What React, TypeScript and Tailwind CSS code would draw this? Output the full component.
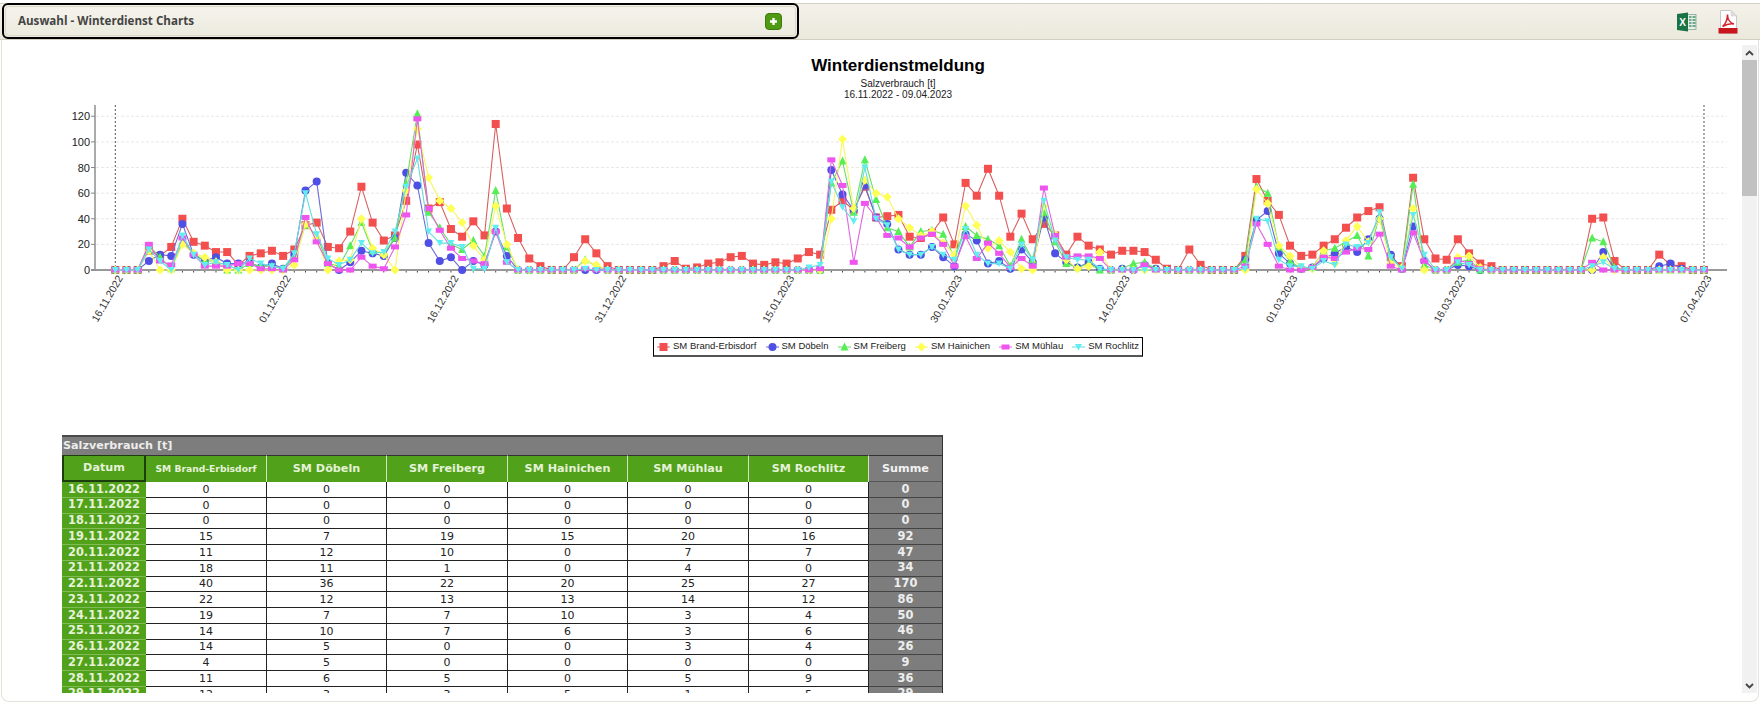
import React from "react";

const N = 143;
const X0 = 115.3;
const DX = 11.188;
const Y0 = 270;
const K = 1.281;

function fill(m: Record<number, number>): number[] {
  const a: number[] = [];
  for (let i = 0; i < N; i++) a.push(m[i] ?? 0);
  return a;
}

const series = [
  {
    name: "SM Brand-Erbisdorf", color: "#f44f4f", line: "#d86060", shape: "square",
    data: fill({3:15,4:11,5:18,6:40,7:22,8:19,9:14,10:14,11:4,12:11,13:13,14:15,15:11,16:16,17:35,18:37,19:18,20:17,21:30,22:65,23:37,24:23,25:27,26:54,27:98,28:48,29:53,30:32,31:26,32:38,33:27,34:114,35:48,36:25,37:9,38:3,41:10,42:24,43:13,44:3,49:3,50:7,51:1,52:2,53:5,54:6,55:10,56:11,57:5,58:4,59:6,60:5,61:9,62:14,63:12,64:47,65:54,66:47,67:65,68:41,69:42,70:43,71:26,72:25,73:29,74:41,75:20,76:68,77:58,78:79,79:58,80:26,81:44,82:24,83:36,84:27,85:12,86:26,87:19,88:16,89:12,90:15,91:15,92:14,93:8,94:1,96:16,97:4,101:11,102:71,103:54,104:43,105:19,106:11,107:12,108:19,109:24,110:33,111:41,112:46,113:49,114:10,115:3,116:72,117:24,118:9,119:8,120:24,121:13,122:5,123:3,132:40,133:41,134:7,138:12,139:4,140:3}),
  },
  {
    name: "SM Döbeln", color: "#4f4fe6", line: "#6a6ad8", shape: "circle",
    data: fill({3:7,4:12,5:11,6:36,7:12,8:7,9:10,10:5,11:5,12:6,13:2,14:5,15:1,16:12,17:62,18:69,19:5,21:6,22:15,23:13,24:11,25:25,26:76,27:66,28:21,29:7,30:10,32:7,33:4,34:30,35:11,64:78,65:59,66:47,67:66,68:41,69:36,70:16,71:12,72:12,73:18,74:10,75:3,76:28,77:23,78:5,79:7,80:1,81:16,82:6,83:41,84:13,85:6,86:2,87:6,88:1,90:1,92:4,93:1,101:8,102:39,103:46,104:13,105:5,106:1,107:2,108:9,109:13,110:18,111:14,112:24,113:40,114:12,115:1,116:34,117:7,120:4,121:3,133:14,134:1,138:3,139:5,140:1}),
  },
  {
    name: "SM Freiberg", color: "#55ee55", line: "#66dd66", shape: "triangle",
    data: fill({3:19,4:10,5:1,6:22,7:13,8:7,9:7,12:5,13:3,14:3,15:1,16:10,17:35,18:27,19:5,20:3,21:19,22:37,23:15,24:13,25:25,26:68,27:122,28:45,29:33,30:20,31:16,32:23,33:11,34:62,35:18,42:8,43:3,64:68,65:85,66:45,67:86,68:55,69:33,70:30,71:18,72:30,73:31,74:28,75:10,76:34,77:27,78:24,79:19,80:3,81:24,82:8,83:45,84:22,85:5,86:2,87:5,90:1,91:5,92:6,93:1,101:8,102:65,103:60,104:18,105:7,106:1,107:2,108:15,109:17,110:22,111:27,112:11,113:42,114:10,115:1,116:67,117:4,120:6,121:8,132:25,133:22,134:2}),
  },
  {
    name: "SM Hainichen", color: "#ffff55", line: "#f6f660", shape: "diamond",
    data: fill({3:15,6:20,7:13,8:10,9:6,16:4,17:36,18:25,20:7,21:8,22:40,23:17,24:12,26:62,27:110,28:72,29:54,30:48,31:37,32:19,33:8,34:50,35:20,42:7,43:4,64:40,65:102,66:48,67:70,68:60,69:57,70:40,71:33,72:27,73:30,74:21,75:12,76:50,77:35,78:17,79:23,80:14,81:1,83:50,84:28,85:8,86:1,87:3,88:14,102:63,103:52,104:19,105:11,106:2,107:1,108:15,109:5,110:23,111:34,112:22,113:40,114:5,115:2,116:48,120:10,121:11,122:2,133:10}),
  },
  {
    name: "SM Mühlau", color: "#ee55ee", line: "#e066e0", shape: "flat",
    data: fill({3:20,4:7,5:4,6:25,7:12,8:3,9:3,10:3,11:5,12:5,13:1,14:1,16:8,17:41,18:22,19:5,22:10,23:3,24:1,25:18,26:43,27:118,28:48,29:31,30:17,31:9,32:7,33:5,34:30,35:6,42:1,63:1,64:86,65:66,66:6,67:52,68:41,69:27,70:25,71:18,72:25,73:28,74:20,75:3,76:26,77:9,78:21,79:13,80:2,81:9,82:3,83:64,84:27,85:10,86:11,87:11,88:9,92:4,101:3,102:36,103:20,104:3,107:2,108:10,109:9,110:14,111:17,112:16,113:28,114:3,116:29,117:7,120:8,121:5,122:1,132:6}),
  },
  {
    name: "SM Rochlitz", color: "#60eef0", line: "#60dde0", shape: "nabla",
    data: fill({3:16,4:7,6:27,7:12,8:4,9:6,10:4,12:9,13:5,14:3,15:1,16:13,17:60,18:28,19:9,20:4,21:8,22:21,23:13,24:14,25:30,26:65,27:87,28:30,29:21,30:21,31:18,32:1,33:1,34:33,35:6,42:1,62:2,63:4,64:69,65:49,66:38,67:80,68:40,69:35,70:16,71:12,72:12,73:18,74:12,75:8,76:32,77:12,78:5,79:5,80:1,81:20,82:8,83:54,84:23,85:10,86:8,87:8,88:1,101:1,102:40,103:38,104:8,105:3,106:3,107:1,108:7,109:4,110:20,111:18,112:21,113:45,114:10,115:1,116:43,117:12,120:6,121:4,132:3,133:6,134:1}),
  },
];

function Marker({ shape, x, y, color }: { shape: string; x: number; y: number; color: string }) {
  switch (shape) {
    case "square":
      return <rect x={x - 4} y={y - 4} width={8} height={8} fill={color} />;
    case "circle":
      return <circle cx={x} cy={y} r={4} fill={color} />;
    case "triangle":
      return <polygon points={`${x},${y - 4.5} ${x + 4},${y + 3.5} ${x - 4},${y + 3.5}`} fill={color} />;
    case "diamond":
      return <polygon points={`${x},${y - 4.5} ${x + 4.5},${y} ${x},${y + 4.5} ${x - 4.5},${y}`} fill={color} />;
    case "flat":
      return <rect x={x - 4} y={y - 2.5} width={8} height={5} fill={color} />;
    default:
      return <polygon points={`${x - 3.5},${y - 3} ${x + 3.5},${y - 3} ${x},${y + 3.5}`} fill={color} />;
  }
}

const xOf = (i: number) => X0 + DX * i;
const yOf = (v: number) => Y0 - v * K;
const xLabels: [number, string][] = [
  [0, "16.11.2022"], [15, "01.12.2022"], [30, "16.12.2022"], [45, "31.12.2022"], [60, "15.01.2023"],
  [75, "30.01.2023"], [90, "14.02.2023"], [105, "01.03.2023"], [120, "16.03.2023"], [142, "07.04.2023"],
];

function Chart() {
  return (
    <svg width={1740} height={235} viewBox="2 100 1740 235" className="block">
      {[20, 40, 60, 80, 100, 120].map((v) => (
        <line key={v} x1={96} x2={1727} y1={yOf(v)} y2={yOf(v)} stroke="#e8e8e8" strokeDasharray="3 2" />
      ))}
      {[0, 142].map((i) => (
        <line key={i} x1={xOf(i)} x2={xOf(i)} y1={105} y2={Y0} stroke="#555" strokeDasharray="2 2" />
      ))}
      {Array.from({ length: N }).map((_, i) => (
        <line key={i} x1={xOf(i)} x2={xOf(i)} y1={Y0} y2={Y0 + 2.5} stroke="#444" />
      ))}
      <line x1={95} x2={95} y1={105} y2={Y0 + 1} stroke="#aaa" strokeWidth={2} />
      <line x1={91} x2={1727} y1={Y0} y2={Y0} stroke="#999" strokeWidth={2} />
      {[0, 20, 40, 60, 80, 100, 120].map((v) => (
        <g key={v}>
          <line x1={91} x2={95} y1={yOf(v)} y2={yOf(v)} stroke="#888" />
          <text x={90} y={yOf(v) + 4} textAnchor="end" fontSize={11} fill="#222" fontFamily="'Liberation Sans', Arial, sans-serif">{v}</text>
        </g>
      ))}
      {series.map((s) => (
        <g key={s.name}>
          <polyline fill="none" stroke={s.line} strokeWidth={1.1} points={s.data.map((v, i) => `${xOf(i)},${yOf(v)}`).join(" ")} />
          {s.data.map((v, i) => (
            <Marker key={i} shape={s.shape} x={xOf(i)} y={yOf(v)} color={s.color} />
          ))}
        </g>
      ))}
      {xLabels.map(([i, t]) => (
        <text key={t} x={xOf(i) + 8} y={Y0 + 8} textAnchor="end" fontSize={10.5} fill="#333" fontFamily="'Liberation Sans', Arial, sans-serif" transform={`rotate(-60 ${xOf(i) + 8} ${Y0 + 8})`}>{t}</text>
      ))}
    </svg>
  );
}

function LegendMark({ shape, color, line }: { shape: string; color: string; line: string }) {
  return (
    <svg width={13} height={10} viewBox="0 0 13 10" className="block shrink-0">
      <line x1={0} x2={13} y1={5} y2={5} stroke={line} />
      <Marker shape={shape} x={6.5} y={5} color={color} />
    </svg>
  );
}

const cols = "grid grid-cols-[84px_121px_120px_121px_120px_121px_120px_74px]";
const rows: [string, number, number, number, number, number, number, number][] = [
  ["16.11.2022", 0, 0, 0, 0, 0, 0, 0],
  ["17.11.2022", 0, 0, 0, 0, 0, 0, 0],
  ["18.11.2022", 0, 0, 0, 0, 0, 0, 0],
  ["19.11.2022", 15, 7, 19, 15, 20, 16, 92],
  ["20.11.2022", 11, 12, 10, 0, 7, 7, 47],
  ["21.11.2022", 18, 11, 1, 0, 4, 0, 34],
  ["22.11.2022", 40, 36, 22, 20, 25, 27, 170],
  ["23.11.2022", 22, 12, 13, 13, 14, 12, 86],
  ["24.11.2022", 19, 7, 7, 10, 3, 4, 50],
  ["25.11.2022", 14, 10, 7, 6, 3, 6, 46],
  ["26.11.2022", 14, 5, 0, 0, 3, 4, 26],
  ["27.11.2022", 4, 5, 0, 0, 0, 0, 9],
  ["28.11.2022", 11, 6, 5, 0, 5, 9, 36],
  ["29.11.2022", 12, 3, 3, 5, 1, 5, 29],
];

function DataTable() {
  return (
    <div className="w-[881px] ml-[60px] font-['DejaVu_Sans',sans-serif] text-[11px] leading-none">
      <div className="h-[20px] bg-[#7d7d7d] border-t-2 border-t-[#4a4a4a] border-r border-r-[#333] flex items-center pl-[1px] font-bold text-[#ececec] text-[11.2px]">Salzverbrauch [t]</div>
      <div className={`${cols} h-[27px] font-bold text-[#e4f2d8] text-[11.2px]`}>
        <div className="bg-[#52a11a] border-x-2 border-b-2 border-t border-[#1c3d0c] flex items-center justify-center">Datum</div>
        {["SM Brand-Erbisdorf", "SM Döbeln", "SM Freiberg", "SM Hainichen", "SM Mühlau", "SM Rochlitz"].map((h, i) => (
          <div key={h} className={`bg-[#52a11a] border-t border-t-[#333] border-r border-r-[#cfe4bb] flex items-center justify-center ${i === 0 ? "text-[9.2px]" : ""}`}>{h}</div>
        ))}
        <div className="bg-[#7d7d7d] border-t border-t-[#333] border-r border-r-[#333] border-b border-b-[#555] flex items-center justify-center text-[#f2f2f2]">Summe</div>
      </div>
      {rows.map((r) => (
        <div key={r[0]} className={`${cols} h-[15.75px] text-[#222]`}>
          <div className="bg-[#52a11a] border-b border-b-[#7fbc55] flex items-center justify-center font-bold text-[11.4px] text-[#e4f2d8]">{r[0]}</div>
          {r.slice(1, 7).map((v, i) => (
            <div key={i} className="bg-white border-b border-b-[#222] border-r border-r-[#222] flex items-center justify-center">{v}</div>
          ))}
          <div className="bg-[#7d7d7d] border-b border-b-[#444] border-r border-r-[#333] flex items-center justify-center font-bold text-[11.4px] text-[#eeeeee]">{r[7]}</div>
        </div>
      ))}
    </div>
  );
}

function ExcelIcon() {
  return (
    <svg width={20} height={20} viewBox="0 0 20 20" className="block">
      <rect x={7} y={2.5} width={12} height={15} fill="#e4efe8" stroke="#6f9f85" strokeWidth={0.7} />
      {[5, 8, 11, 14].map((y) => (
        <line key={y} x1={12} x2={18.5} y1={y} y2={y} stroke="#3f8a62" strokeWidth={1.4} />
      ))}
      <line x1={15} x2={15} y1={3} y2={17} stroke="#e4efe8" />
      <polygon points="0,2 11,0.5 11,19.5 0,18" fill="#1a7345" />
      <text x={5.5} y={13.5} textAnchor="middle" fontSize={10} fontWeight={700} fill="#fff" fontFamily="'Liberation Sans', sans-serif">X</text>
    </svg>
  );
}

function PdfIcon() {
  return (
    <svg width={20} height={24} viewBox="0 0 20 24" className="block">
      <path d="M2.5 0.5H13L18.5 6V23.5H2.5Z" fill="#fff" stroke="#c8c8c8" />
      <path d="M13 0.5V6H18.5Z" fill="#e0e0e0" stroke="#c8c8c8" strokeWidth={0.5} />
      <path d="M4.5 16.5C7 15 9.5 10 9.5 4.5C9.5 9 12 13 16 14C12.5 13.5 8 14.5 4.5 16.5Z" fill="none" stroke="#d8232a" strokeWidth={1.5} />
      <rect x={0.5} y={18} width={19} height={5.5} fill="#c9151c" />
    </svg>
  );
}

export default function App() {
  return (
    <div className="w-[1760px] h-[716px] overflow-hidden bg-white flex flex-col">
      <div className="h-[40px] shrink-0 pt-[3px]">
        <header className="h-[37px] flex bg-gradient-to-b from-[#f4f1ea] to-[#ebe8dc] border-y border-t-[#d6d3c6] border-b-[#d3d0c2]">
          <div className="w-[797px] h-[36px] -mt-px ml-[2px] rounded-[6px] border-2 border-black p-[1px] shrink-0">
            <div className="h-full rounded-[4px] border border-[#dcdac6] bg-gradient-to-b from-[#f5f3ec] to-[#ecebdf] flex items-center justify-between pl-[12px] pr-[13px]">
              <span className="font-['Open_Sans',sans-serif] font-bold text-[11.6px] text-[#444]">Auswahl - Winterdienst Charts</span>
              <span className="w-[17px] h-[17px] rounded-[4px] bg-[#4f9a12] border border-[#3c7a0c] flex items-center justify-center">
                <svg width={9} height={9} viewBox="0 0 9 9" className="block">
                  <path d="M4.5 1V8M1 4.5H8" stroke="#fff" strokeWidth={2.4} />
                </svg>
              </span>
            </div>
          </div>
          <div className="flex-1 flex items-center justify-end gap-[21px] pr-[22px]">
            <ExcelIcon />
            <PdfIcon />
          </div>
        </header>
      </div>
      <div className="h-[662px] shrink-0 mx-px border-x border-b border-[#e4e2d8] rounded-b-[8px] overflow-hidden">
        <main className="flex h-[653px]">
          <div className="w-[1740px] h-[653px] overflow-hidden shrink-0">
            <div className="pl-[52px] pt-[15px] text-center font-['Liberation_Sans',Arial,sans-serif] text-[#222]">
              <div className="text-[17px] leading-[22px] font-bold text-black">Winterdienstmeldung</div>
              <div className="text-[10px] leading-[11px] mt-[1px]">Salzverbrauch [t]</div>
              <div className="text-[10px] leading-[11px]">16.11.2022 - 09.04.2023</div>
            </div>
            <Chart />
            <div className="pl-[52px] flex justify-center mt-[2px]">
              <div className="h-[20px] w-[490px] border border-black border-b-2 border-b-[#555] flex items-center justify-between px-[3px] font-['Liberation_Sans',Arial,sans-serif] text-[9.5px] text-[#222]">
                {series.map((s) => (
                  <span key={s.name} className="flex items-center gap-[3px]">
                    <LegendMark shape={s.shape} color={s.color} line={s.line} />
                    {s.name}
                  </span>
                ))}
              </div>
            </div>
            <div className="h-[78px]" />
            <DataTable />
          </div>
          <div className="w-[15px] mt-[5px] h-[648px] bg-[#f1f1f1] flex flex-col items-center shrink-0">
            <div className="h-[15px] flex items-center justify-center shrink-0">
              <svg width={9} height={6} viewBox="0 0 9 6" className="block"><path d="M1 5L4.5 1.5L8 5" fill="none" stroke="#444" strokeWidth={1.8} /></svg>
            </div>
            <div className="w-full h-[136px] bg-[#c1c1c1] shrink-0" />
            <div className="flex-1" />
            <div className="h-[15px] flex items-center justify-center shrink-0">
              <svg width={9} height={6} viewBox="0 0 9 6" className="block"><path d="M1 1L4.5 4.5L8 1" fill="none" stroke="#444" strokeWidth={1.8} /></svg>
            </div>
          </div>
        </main>
      </div>
    </div>
  );
}
